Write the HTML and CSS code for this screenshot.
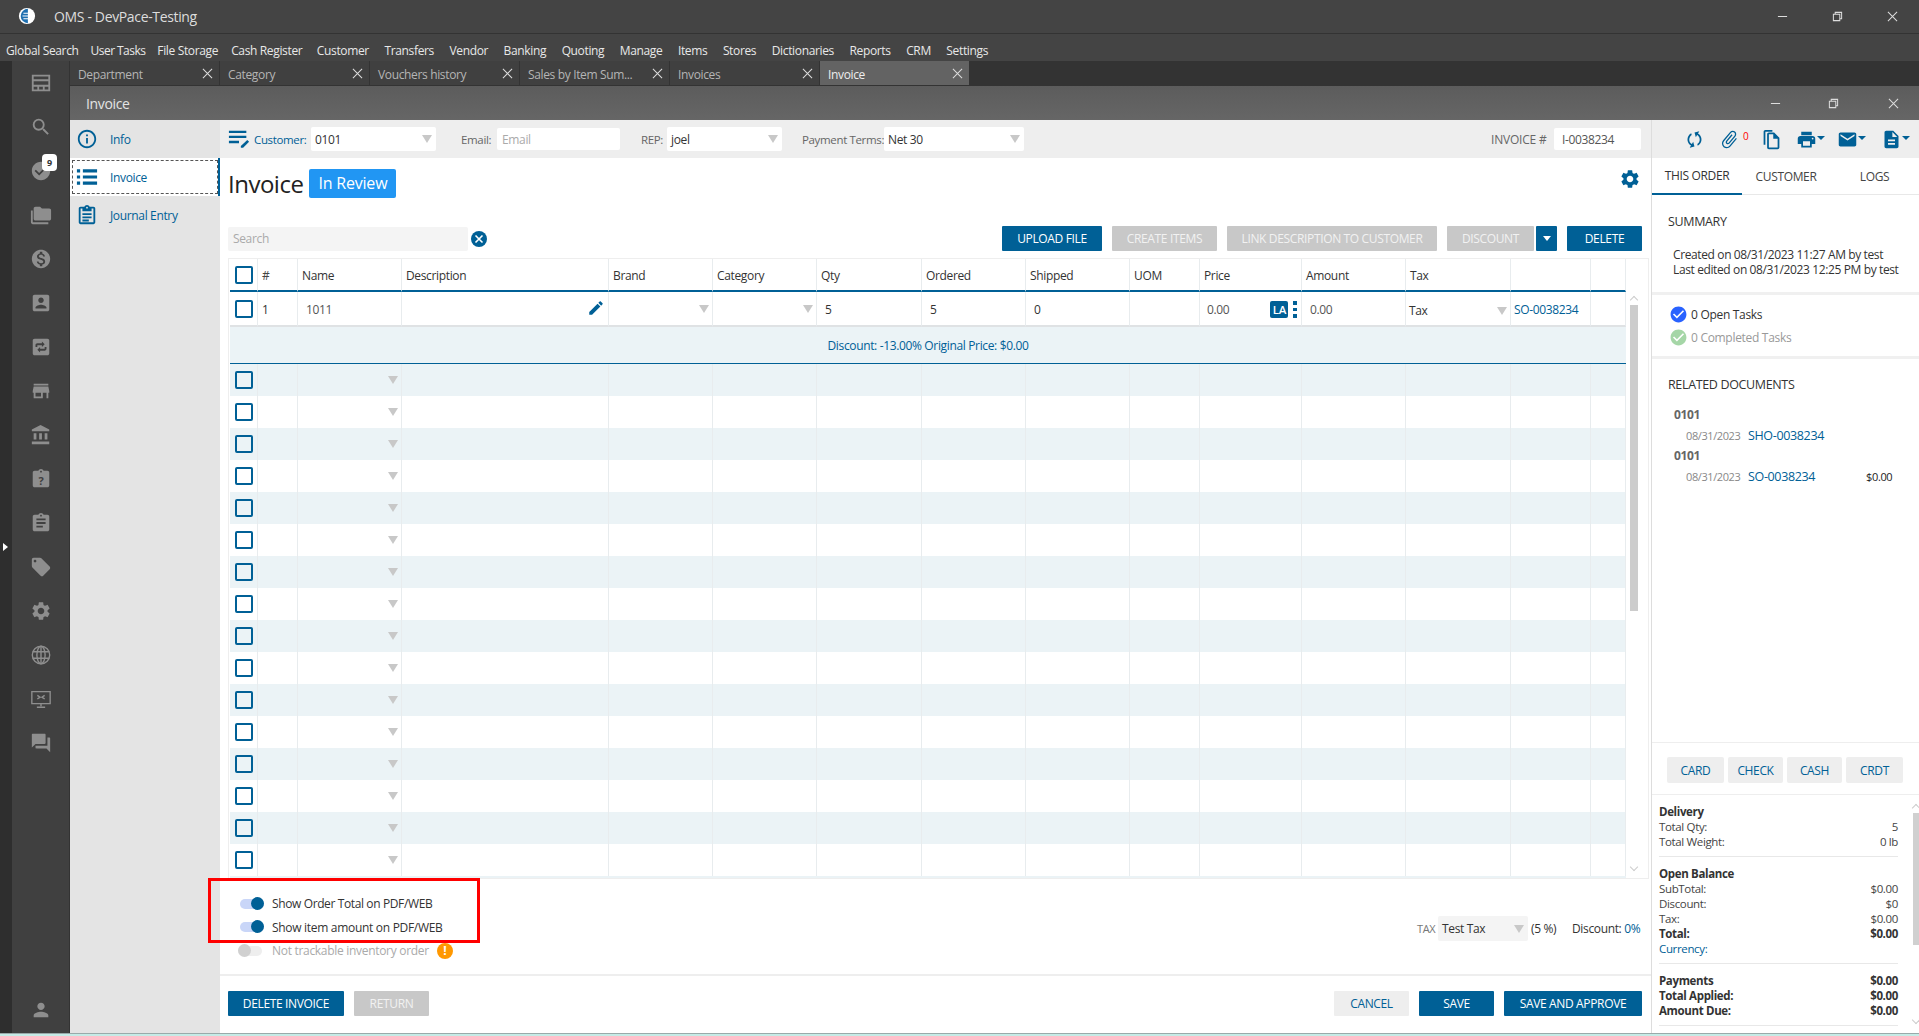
FILE: index.html
```html
<!DOCTYPE html>
<html lang="en">
<head>
<meta charset="utf-8">
<title>OMS - DevPace-Testing</title>
<link rel="stylesheet" href="styles.css">
</head>
<body>
<svg class="defs" width="0" height="0" aria-hidden="true">
  <symbol id="i-search" viewBox="0 0 24 24"><path d="M15.5 14h-.79l-.28-.27A6.471 6.471 0 0 0 16 9.5 6.5 6.5 0 1 0 9.5 16c1.61 0 3.09-.59 4.23-1.57l.27.28v.79l5 4.99L20.49 19l-4.99-5zm-6 0C7.01 14 5 11.99 5 9.5S7.01 5 9.5 5 14 7.01 14 9.5 11.99 14 9.5 14z"/></symbol>
  <symbol id="i-check" viewBox="0 0 24 24"><path d="M12 2C6.48 2 2 6.48 2 12s4.48 10 10 10 10-4.48 10-10S17.52 2 12 2zm-2 15l-5-5 1.41-1.41L10 14.17l7.59-7.59L19 8l-9 9z"/></symbol>
  <symbol id="i-folders" viewBox="0 0 24 24"><path d="M3 7H1v13c0 1.1.9 2 2 2h17v-2H3V7zm18-2h-8l-2-2H6c-1.1 0-2 .9-2 2v11c0 1.1.9 2 2 2h15c1.1 0 2-.9 2-2V7c0-1.1-.9-2-2-2z"/></symbol>
  <symbol id="i-dollar" viewBox="0 0 24 24"><path d="M12 2C6.48 2 2 6.48 2 12s4.48 10 10 10 10-4.48 10-10S17.52 2 12 2zm1.41 16.09V20h-2.67v-1.93c-1.71-.36-3.16-1.46-3.27-3.4h1.96c.1 1.05.82 1.87 2.65 1.87 1.96 0 2.4-.98 2.4-1.59 0-.83-.44-1.61-2.67-2.14-2.48-.6-4.18-1.62-4.18-3.67 0-1.72 1.39-2.84 3.11-3.21V4h2.67v1.95c1.86.45 2.79 1.86 2.87 3.39H14.3c-.05-1.11-.64-1.87-2.22-1.87-1.5 0-2.4.68-2.4 1.64 0 .84.65 1.39 2.67 1.91s4.18 1.39 4.18 3.91c-.01 1.83-1.38 2.83-3.12 3.16z"/></symbol>
  <symbol id="i-contact" viewBox="0 0 24 24"><path d="M3 5v14c0 1.1.89 2 2 2h14c1.1 0 2-.9 2-2V5c0-1.1-.9-2-2-2H5c-1.11 0-2 .9-2 2zm12 4c0 1.66-1.34 3-3 3s-3-1.34-3-3 1.34-3 3-3 3 1.34 3 3zm-9 8c0-2 4-3.1 6-3.1s6 1.1 6 3.1v1H6v-1z"/></symbol>
  <symbol id="i-swap" viewBox="0 0 24 24"><path fill-rule="evenodd" d="M5 3h14c1.1 0 2 .9 2 2v14c0 1.1-.9 2-2 2H5c-1.1 0-2-.9-2-2V5c0-1.1.9-2 2-2zm8 3v2H8c-1.1 0-2 .9-2 2v2h2v-2h5v2l3-3-3-3zm-2 12v-2h5c1.1 0 2-.9 2-2v-2h-2v2h-5v-2l-3 3 3 3z"/></symbol>
  <symbol id="i-store" viewBox="0 0 24 24"><path d="M20 4H4v2h16V4zm1 10v-2l-1-5H4l-1 5v2h1v6h10v-6h4v6h2v-6h1zm-9 4H6v-4h6v4z"/></symbol>
  <symbol id="i-bank" viewBox="0 0 24 24"><path d="M4 10v7h3v-7H4zm6 0v7h3v-7h-3zM2 22h19v-3H2v3zm14-12v7h3v-7h-3zm-4.5-9L2 6v2h19V6l-9.5-5z"/></symbol>
  <symbol id="i-clip" viewBox="0 0 24 24"><path d="M19 3h-4.18C14.4 1.84 13.3 1 12 1c-1.3 0-2.4.84-2.82 2H5c-1.1 0-2 .9-2 2v14c0 1.1.9 2 2 2h14c1.1 0 2-.9 2-2V5c0-1.1-.9-2-2-2zm-7 0c.55 0 1 .45 1 1s-.45 1-1 1-1-.45-1-1 .45-1 1-1z"/></symbol>
  <symbol id="i-assign" viewBox="0 0 24 24"><path d="M19 3h-4.18C14.4 1.84 13.3 1 12 1c-1.3 0-2.4.84-2.82 2H5c-1.1 0-2 .9-2 2v14c0 1.1.9 2 2 2h14c1.1 0 2-.9 2-2V5c0-1.1-.9-2-2-2zm-7 0c.55 0 1 .45 1 1s-.45 1-1 1-1-.45-1-1 .45-1 1-1zm2 14H7v-2h7v2zm3-4H7v-2h10v2zm0-4H7V7h10v2z"/></symbol>
  <symbol id="i-tag" viewBox="0 0 24 24"><path d="M21.41 11.58l-9-9C12.05 2.22 11.55 2 11 2H4c-1.1 0-2 .9-2 2v7c0 .55.22 1.05.59 1.42l9 9c.36.36.86.58 1.41.58.55 0 1.05-.22 1.41-.59l7-7c.37-.36.59-.86.59-1.41 0-.55-.23-1.06-.59-1.42zM5.5 7C4.67 7 4 6.33 4 5.5S4.67 4 5.5 4 7 4.67 7 5.5 6.33 7 5.5 7z"/></symbol>
  <symbol id="i-gear" viewBox="0 0 24 24"><path d="M19.14 12.94c.04-.3.06-.61.06-.94 0-.32-.02-.64-.07-.94l2.03-1.58c.18-.14.23-.41.12-.61l-1.92-3.32c-.12-.22-.37-.29-.59-.22l-2.39.96c-.5-.38-1.03-.7-1.62-.94l-.36-2.54c-.04-.24-.24-.41-.48-.41h-3.84c-.24 0-.43.17-.47.41l-.36 2.54c-.59.24-1.13.57-1.62.94l-2.39-.96c-.22-.08-.47 0-.59.22L2.74 8.87c-.12.21-.08.47.12.61l2.03 1.58c-.05.3-.09.63-.09.94s.02.64.07.94l-2.03 1.58c-.18.14-.23.41-.12.61l1.92 3.32c.12.22.37.29.59.22l2.39-.96c.5.38 1.03.7 1.62.94l.36 2.54c.05.24.24.41.48.41h3.84c.24 0 .44-.17.47-.41l.36-2.54c.59-.24 1.13-.56 1.62-.94l2.39.96c.22.08.47 0 .59-.22l1.92-3.32c.12-.22.07-.47-.12-.61l-2.01-1.58zM12 15.6c-1.98 0-3.6-1.62-3.6-3.6s1.62-3.6 3.6-3.6 3.6 1.62 3.6 3.6-1.62 3.6-3.6 3.6z"/></symbol>
  <symbol id="i-forum" viewBox="0 0 24 24"><path d="M21 6h-2v9H6v2c0 .55.45 1 1 1h11l4 4V7c0-.55-.45-1-1-1zm-4 6V3c0-.55-.45-1-1-1H3c-.55 0-1 .45-1 1v14l4-4h10c.55 0 1-.45 1-1z"/></symbol>
  <symbol id="i-person" viewBox="0 0 24 24"><path d="M12 12c2.21 0 4-1.79 4-4s-1.79-4-4-4-4 1.79-4 4 1.79 4 4 4zm0 2c-2.67 0-8 1.34-8 4v2h16v-2c0-2.66-5.33-4-8-4z"/></symbol>
  <symbol id="i-edit" viewBox="0 0 24 24"><path d="M3 17.25V21h3.75L17.81 9.94l-3.75-3.75L3 17.25zM20.71 7.04c.39-.39.39-1.02 0-1.41l-2.34-2.34c-.39-.39-1.02-.39-1.41 0l-1.83 1.83 3.75 3.75 1.83-1.83z"/></symbol>
  <symbol id="i-print" viewBox="0 0 24 24"><path d="M19 8H5c-1.66 0-3 1.34-3 3v6h4v4h12v-4h4v-6c0-1.66-1.34-3-3-3zm-3 11H8v-5h8v5zm3-7c-.55 0-1-.45-1-1s.45-1 1-1 1 .45 1 1-.45 1-1 1zm-1-9H6v4h12V3z"/></symbol>
  <symbol id="i-mail" viewBox="0 0 24 24"><path d="M20 4H4c-1.1 0-1.99.9-1.99 2L2 18c0 1.1.9 2 2 2h16c1.1 0 2-.9 2-2V6c0-1.1-.9-2-2-2zm0 4l-8 5-8-5V6l8 5 8-5v2z"/></symbol>
  <symbol id="i-doc" viewBox="0 0 24 24"><path d="M14 2H6c-1.1 0-1.99.9-1.99 2L4 20c0 1.1.89 2 1.99 2H18c1.1 0 2-.9 2-2V8l-6-6zm2 16H8v-2h8v2zm0-4H8v-2h8v2zm-3-5V3.5L18.5 9H13z"/></symbol>
  <symbol id="i-attach" viewBox="0 0 24 24"><path d="M16.5 6v11.5c0 2.21-1.79 4-4 4s-4-1.79-4-4V5c0-1.38 1.12-2.5 2.5-2.5s2.5 1.12 2.5 2.5v10.5c0 .55-.45 1-1 1s-1-.45-1-1V6H10v9.5c0 1.38 1.12 2.5 2.5 2.5s2.5-1.12 2.5-2.5V5c0-2.21-1.79-4-4-4S7 2.79 7 5v12.5c0 3.04 2.46 5.5 5.5 5.5s5.5-2.46 5.5-5.5V6h-1.5z" transform="rotate(40 12 12)"/></symbol>
  <symbol id="i-sync" viewBox="0 0 24 24"><path d="M12 4V1L8 5l4 4V6c3.31 0 6 2.69 6 6 0 1.01-.25 1.97-.7 2.8l1.46 1.46C19.54 15.03 20 13.57 20 12c0-4.42-3.58-8-8-8zm0 14c-3.31 0-6-2.69-6-6 0-1.01.25-1.97.7-2.8L5.24 7.74C4.46 8.97 4 10.43 4 12c0 4.42 3.58 8 8 8v3l4-4-4-4v3z" transform="rotate(30 12 12)"/></symbol>
  <symbol id="i-copy" viewBox="0 0 24 24"><path d="M13 1H5c-1.1 0-2 .9-2 2v15h2V3h8V1zm2 3H9c-1.1 0-2 .9-2 2v15c0 1.1.9 2 2 2h10c1.1 0 2-.9 2-2V10l-6-6zm4 17H9V6h5v5h5v10z"/></symbol>
  <symbol id="i-info" viewBox="0 0 24 24"><path d="M11 7h2v2h-2zm0 4h2v6h-2zm1-9C6.48 2 2 6.48 2 12s4.48 10 10 10 10-4.48 10-10S17.52 2 12 2zm0 18c-4.41 0-8-3.59-8-8s3.59-8 8-8 8 3.59 8 8-3.59 8-8 8z"/></symbol>
  <symbol id="i-journal" viewBox="0 0 24 24"><path d="M19 3h-4.2C14.4 1.8 13.3 1 12 1s-2.4.8-2.8 2H5c-1.1 0-2 .9-2 2v15c0 1.1.9 2 2 2h14c1.1 0 2-.9 2-2V5c0-1.1-.9-2-2-2zm-7 0c.6 0 1 .4 1 1s-.4 1-1 1-1-.4-1-1 .4-1 1-1zm7 17H5V5h2v3h10V5h2v15zM7 10h10v2H7zm0 3.500h10v2H7zM7 17h7v2H7z"/></symbol>
  <symbol id="i-list" viewBox="0 0 24 24"><path d="M1 3.500h3.500V7H1zm6.500 0H23V7H7.500zM1 10.250h3.500v3.500H1zm6.500 0H23v3.500H7.500zM1 17h3.500v3.500H1zm6.500 0H23v3.500H7.500z"/></symbol>
  <symbol id="i-lines" viewBox="0 0 24 24"><path d="M1 3h19v2.500H1zm0 5.500h19V11H1zM1 14h11v2.500H1zm13 5.500L21 13l2 2-6.500 6.500H14z"/></symbol>
</svg>

<div class="app">
  <header class="titlebar">
    <svg class="logo" viewBox="0 0 20 20"><circle cx="10" cy="10" r="9" fill="#fff"/><path d="M11 2a8 8 0 0 0 0 16z" fill="#1e6fb0"/><path d="M6 7h8M5 10h10M6 13h8" stroke="#fff" stroke-width="1.200"/></svg>
    <span class="apptitle">OMS - DevPace-Testing</span>
    <div class="winctl">
      <span class="win-btn"><svg viewBox="0 0 12 12"><path d="M1 6h10" /></svg></span>
      <span class="win-btn"><svg viewBox="0 0 12 12"><path d="M1.500 3.500h7v7h-7zM3.500 3.500v-2h7v7h-2"/></svg></span>
      <span class="win-btn"><svg viewBox="0 0 12 12"><path d="M1 1l10 10M11 1L1 11"/></svg></span>
    </div>
  </header>
  <nav class="menubar">
    <span>Global Search</span><span>User Tasks</span><span>File Storage</span><span>Cash Register</span><span>Customer</span><span>Transfers</span><span>Vendor</span><span>Banking</span><span>Quoting</span><span>Manage</span><span>Items</span><span>Stores</span><span>Dictionaries</span><span>Reports</span><span>CRM</span><span>Settings</span>
  </nav>
  <div class="body">
    <div class="edge"><span class="edge-arrow"></span></div>
    <aside class="rail">
      <span class="rail-i"><svg viewBox="0 0 24 24"><path fill-rule="evenodd" d="M2 3h20v18H2zm2 2v3h16V5zm0 5v4h16v-4zm0 6v3h4v-3zm6 0v3h4v-3zm6 0v3h4v-3z"/></svg></span>
      <span class="rail-i"><svg><use href="#i-search"/></svg></span>
      <span class="rail-i"><svg><use href="#i-check"/></svg><b class="count">9</b></span>
      <span class="rail-i"><svg><use href="#i-folders"/></svg></span>
      <span class="rail-i"><svg><use href="#i-dollar"/></svg></span>
      <span class="rail-i"><svg><use href="#i-contact"/></svg></span>
      <span class="rail-i"><svg><use href="#i-swap"/></svg></span>
      <span class="rail-i"><svg><use href="#i-store"/></svg></span>
      <span class="rail-i"><svg><use href="#i-bank"/></svg></span>
      <span class="rail-i"><svg viewBox="0 0 24 24"><use href="#i-clip"/><text x="12" y="18" text-anchor="middle" class="qmark">?</text></svg></span>
      <span class="rail-i"><svg><use href="#i-assign"/></svg></span>
      <span class="rail-i"><svg><use href="#i-tag"/></svg></span>
      <span class="rail-i"><svg><use href="#i-gear"/></svg></span>
      <span class="rail-i"><svg viewBox="0 0 24 24" class="stroked"><circle cx="12" cy="12" r="9.500"/><ellipse cx="12" cy="12" rx="4.500" ry="9.500"/><path d="M3 8.500h18M3 15.500h18M12 2.500v19"/></svg></span>
      <span class="rail-i"><svg viewBox="0 0 24 24" class="stroked"><path d="M2 4h20v13H2zM12 17v3M7.500 21h9M8 12l3-2-3-2M16 12l-3-2 3-2"/></svg></span>
      <span class="rail-i"><svg><use href="#i-forum"/></svg></span>
      <span class="rail-i rail-bottom"><svg><use href="#i-person"/></svg></span>
    </aside>
    <div class="work">
      <div class="tabs">
        <div class="tab"><span>Department</span><svg viewBox="0 0 12 12"><path d="M1 1l10 10M11 1L1 11"/></svg></div>
        <div class="tab"><span>Category</span><svg viewBox="0 0 12 12"><path d="M1 1l10 10M11 1L1 11"/></svg></div>
        <div class="tab"><span>Vouchers history</span><svg viewBox="0 0 12 12"><path d="M1 1l10 10M11 1L1 11"/></svg></div>
        <div class="tab"><span>Sales by Item Sum...</span><svg viewBox="0 0 12 12"><path d="M1 1l10 10M11 1L1 11"/></svg></div>
        <div class="tab"><span>Invoices</span><svg viewBox="0 0 12 12"><path d="M1 1l10 10M11 1L1 11"/></svg></div>
        <div class="tab tab-on"><span>Invoice</span><svg viewBox="0 0 12 12"><path d="M1 1l10 10M11 1L1 11"/></svg></div>
      </div>
      <div class="winhead">
        <span class="wintitle">Invoice</span>
        <div class="winctl winctl-in">
          <span class="win-btn"><svg viewBox="0 0 12 12"><path d="M1 6h10"/></svg></span>
          <span class="win-btn"><svg viewBox="0 0 12 12"><path d="M1.500 3.500h7v7h-7zM3.500 3.500v-2h7v7h-2"/></svg></span>
          <span class="win-btn"><svg viewBox="0 0 12 12"><path d="M1 1l10 10M11 1L1 11"/></svg></span>
        </div>
      </div>
      <div class="panes">
        <div class="sidenav">
          <div class="nav-row"><svg><use href="#i-info"/></svg><span>Info</span></div>
          <div class="nav-row nav-on"><svg><use href="#i-list"/></svg><span>Invoice</span></div>
          <div class="nav-row"><svg><use href="#i-journal"/></svg><span>Journal Entry</span></div>
        </div>
        <main class="main">
          <div class="formbar">
            <svg class="fb-icon"><use href="#i-lines"/></svg>
            <label class="lbl lbl-blue lbl-cust">Customer:</label>
            <div class="sel sel-cust"><span>0101</span><i class="arrow"></i></div>
            <label class="lbl lbl-email">Email:</label>
            <div class="inp inp-email">Email</div>
            <label class="lbl lbl-rep">REP:</label>
            <div class="sel sel-rep"><span>joel</span><i class="arrow"></i></div>
            <label class="lbl lbl-terms">Payment Terms:</label>
            <div class="sel sel-terms"><span>Net 30</span><i class="arrow"></i></div>
            <label class="lbl lbl-inv">INVOICE #</label>
            <div class="inp inp-inv">I-0038234</div>
          </div>
          <div class="titlerow">
            <h1>Invoice</h1>
            <span class="status">In Review</span>
            <svg class="cog"><use href="#i-gear"/></svg>
          </div>
          <div class="actions">
            <div class="search">Search</div>
            <span class="clear"><svg viewBox="0 0 12 12"><path d="M2.500 2.500l7 7M9.500 2.500l-7 7"/></svg></span>
            <div class="act-btns">
              <button class="btn btn-up">UPLOAD FILE</button>
              <button class="btn btn-off btn-ci">CREATE ITEMS</button>
              <button class="btn btn-off btn-link">LINK DESCRIPTION TO CUSTOMER</button>
              <div class="split"><button class="btn btn-off btn-disc">DISCOUNT</button><button class="btn btn-caret"><i></i></button></div>
              <button class="btn btn-del">DELETE</button>
            </div>
          </div>
          <div class="frame">
            <div class="gridwrap">
              <table class="grid">
                <colgroup><col class="c28"><col class="c40"><col class="c104"><col class="c207"><col class="c104"><col class="c104"><col class="c105"><col class="c104"><col class="c104"><col class="c70"><col class="c102"><col class="c104"><col class="c105"><col class="c80"><col class="c35"></colgroup>
                <thead>
                  <tr><th class="cb"><span class="check"></span></th><th class="hash">#</th><th>Name</th><th>Description</th><th>Brand</th><th>Category</th><th>Qty</th><th>Ordered</th><th>Shipped</th><th>UOM</th><th>Price</th><th>Amount</th><th>Tax</th><th></th><th></th></tr>
                </thead>
                <tbody>
                  <tr class="r-item"><td class="cb"><span class="check"></span></td><td class="num">1</td><td class="pad9 soft">1011</td><td class="endcell"><svg class="pencil"><use href="#i-edit"/></svg></td><td class="endcell"><i class="arrow"></i></td><td class="endcell"><i class="arrow"></i></td><td class="pad9">5</td><td class="pad9">5</td><td class="pad9">0</td><td></td><td class="pricecell"><div class="pricewrap"><span class="soft">0.00</span><b class="la">LA</b><span class="dots"></span></div></td><td class="pad9 soft">0.00</td><td class="taxcell"><div class="taxwrap"><span>Tax</span><i class="arrow"></i></div></td><td class="linkcell">SO-0038234</td><td></td></tr>
                  <tr class="r-band"><td colspan="15">Discount: -13.00% Original Price: $0.00</td></tr>
                  <tr class="tint"><td class="cb"><span class="check"></span></td><td></td><td class="endcell"><i class="arrow"></i></td><td></td><td></td><td></td><td></td><td></td><td></td><td></td><td></td><td></td><td></td><td></td><td></td></tr>
                  <tr><td class="cb"><span class="check"></span></td><td></td><td class="endcell"><i class="arrow"></i></td><td></td><td></td><td></td><td></td><td></td><td></td><td></td><td></td><td></td><td></td><td></td><td></td></tr>
                  <tr class="tint"><td class="cb"><span class="check"></span></td><td></td><td class="endcell"><i class="arrow"></i></td><td></td><td></td><td></td><td></td><td></td><td></td><td></td><td></td><td></td><td></td><td></td><td></td></tr>
                  <tr><td class="cb"><span class="check"></span></td><td></td><td class="endcell"><i class="arrow"></i></td><td></td><td></td><td></td><td></td><td></td><td></td><td></td><td></td><td></td><td></td><td></td><td></td></tr>
                  <tr class="tint"><td class="cb"><span class="check"></span></td><td></td><td class="endcell"><i class="arrow"></i></td><td></td><td></td><td></td><td></td><td></td><td></td><td></td><td></td><td></td><td></td><td></td><td></td></tr>
                  <tr><td class="cb"><span class="check"></span></td><td></td><td class="endcell"><i class="arrow"></i></td><td></td><td></td><td></td><td></td><td></td><td></td><td></td><td></td><td></td><td></td><td></td><td></td></tr>
                  <tr class="tint"><td class="cb"><span class="check"></span></td><td></td><td class="endcell"><i class="arrow"></i></td><td></td><td></td><td></td><td></td><td></td><td></td><td></td><td></td><td></td><td></td><td></td><td></td></tr>
                  <tr><td class="cb"><span class="check"></span></td><td></td><td class="endcell"><i class="arrow"></i></td><td></td><td></td><td></td><td></td><td></td><td></td><td></td><td></td><td></td><td></td><td></td><td></td></tr>
                  <tr class="tint"><td class="cb"><span class="check"></span></td><td></td><td class="endcell"><i class="arrow"></i></td><td></td><td></td><td></td><td></td><td></td><td></td><td></td><td></td><td></td><td></td><td></td><td></td></tr>
                  <tr><td class="cb"><span class="check"></span></td><td></td><td class="endcell"><i class="arrow"></i></td><td></td><td></td><td></td><td></td><td></td><td></td><td></td><td></td><td></td><td></td><td></td><td></td></tr>
                  <tr class="tint"><td class="cb"><span class="check"></span></td><td></td><td class="endcell"><i class="arrow"></i></td><td></td><td></td><td></td><td></td><td></td><td></td><td></td><td></td><td></td><td></td><td></td><td></td></tr>
                  <tr><td class="cb"><span class="check"></span></td><td></td><td class="endcell"><i class="arrow"></i></td><td></td><td></td><td></td><td></td><td></td><td></td><td></td><td></td><td></td><td></td><td></td><td></td></tr>
                  <tr class="tint"><td class="cb"><span class="check"></span></td><td></td><td class="endcell"><i class="arrow"></i></td><td></td><td></td><td></td><td></td><td></td><td></td><td></td><td></td><td></td><td></td><td></td><td></td></tr>
                  <tr><td class="cb"><span class="check"></span></td><td></td><td class="endcell"><i class="arrow"></i></td><td></td><td></td><td></td><td></td><td></td><td></td><td></td><td></td><td></td><td></td><td></td><td></td></tr>
                  <tr class="tint"><td class="cb"><span class="check"></span></td><td></td><td class="endcell"><i class="arrow"></i></td><td></td><td></td><td></td><td></td><td></td><td></td><td></td><td></td><td></td><td></td><td></td><td></td></tr>
                  <tr><td class="cb"><span class="check"></span></td><td></td><td class="endcell"><i class="arrow"></i></td><td></td><td></td><td></td><td></td><td></td><td></td><td></td><td></td><td></td><td></td><td></td><td></td></tr>
                </tbody>
              </table>
            </div>
            <div class="vscroll"><i class="chev chev-up"></i><span class="thumb"></span><i class="chev chev-down"></i></div>
          </div>
          <div class="options">
            <div class="toggles">
              <div class="tg"><span class="switch"></span><span class="tg-tight">Show Order Total on PDF/WEB</span></div>
              <div class="tg"><span class="switch"></span><span>Show item amount on PDF/WEB</span></div>
              <div class="tg tg-off"><span class="switch"></span><span>Not trackable inventory order</span><b class="warn">!</b></div>
            </div>
            <div class="taxbox">
              <span class="taxlbl">TAX</span>
              <div class="sel sel-tax"><span>Test Tax</span><i class="arrow"></i></div>
              <span class="pct">(5 %)</span>
              <span class="disc">Discount: <a>0%</a></span>
            </div>
            <div class="redbox"></div>
          </div>
          <div class="foot">
            <button class="btn btn-delinv">DELETE INVOICE</button>
            <button class="btn btn-off btn-ret">RETURN</button>
            <button class="btn btn-ghost">CANCEL</button>
            <button class="btn btn-save">SAVE</button>
            <button class="btn btn-sa">SAVE AND APPROVE</button>
          </div>
        </main>
        <aside class="side">
          <div class="sidetools">
            <svg class="t-sync"><use href="#i-sync"/></svg>
            <svg class="t-attach"><use href="#i-attach"/></svg><span class="zero">0</span>
            <svg class="t-copy"><use href="#i-copy"/></svg>
            <svg class="t-print"><use href="#i-print"/></svg><i class="caret"></i>
            <svg class="t-mail"><use href="#i-mail"/></svg><i class="caret"></i>
            <svg class="t-doc"><use href="#i-doc"/></svg><i class="caret"></i>
          </div>
          <div class="sidetabs">
            <span class="st st-on">THIS ORDER</span><span class="st st-mid">CUSTOMER</span><span class="st st-last">LOGS</span>
          </div>
          <section class="sec-sum">
            <h3>SUMMARY</h3>
            <p>Created on 08/31/2023 11:27 AM by test<br>Last edited on 08/31/2023 12:25 PM by test</p>
          </section>
          <section class="sec-tasks">
            <div class="task"><svg class="ck-blue"><use href="#i-check"/></svg><span>0 Open Tasks</span></div>
            <div class="task task-done"><svg class="ck-green"><use href="#i-check"/></svg><span>0 Completed Tasks</span></div>
          </section>
          <section class="sec-rel">
            <h3>RELATED DOCUMENTS</h3>
            <div class="rel-name">0101</div>
            <div class="rel-row"><span class="rel-date">08/31/2023</span><a class="rel-link">SHO-0038234</a></div>
            <div class="rel-name">0101</div>
            <div class="rel-row"><span class="rel-date">08/31/2023</span><a class="rel-link">SO-0038234</a><span class="rel-amt">$0.00</span></div>
          </section>
          <div class="paybtns">
            <button class="pay pay-w">CARD</button><button class="pay">CHECK</button><button class="pay">CASH</button><button class="pay pay-w">CRDT</button>
          </div>
          <div class="totals">
            <div class="tot-body">
              <div class="tot-group">
                <div class="tot-row bold"><span>Delivery</span></div>
                <div class="tot-row"><span>Total Qty:</span><span>5</span></div>
                <div class="tot-row"><span>Total Weight:</span><span>0 lb</span></div>
              </div>
              <div class="tot-group">
                <div class="tot-row bold"><span>Open Balance</span></div>
                <div class="tot-row"><span>SubTotal:</span><span>$0.00</span></div>
                <div class="tot-row"><span>Discount:</span><span>$0</span></div>
                <div class="tot-row"><span>Tax:</span><span>$0.00</span></div>
                <div class="tot-row bold"><span>Total:</span><span>$0.00</span></div>
                <div class="tot-row"><a>Currency:</a></div>
              </div>
              <div class="tot-group">
                <div class="tot-row bold"><span>Payments</span><span>$0.00</span></div>
                <div class="tot-row bold"><span>Total Applied:</span><span>$0.00</span></div>
                <div class="tot-row bold"><span>Amount Due:</span><span>$0.00</span></div>
              </div>
            </div>
            <div class="tot-scroll"><i class="chev chev-up"></i><span class="tot-thumb"></span><i class="chev chev-down"></i></div>
          </div>
        </aside>
      </div>
    </div>
  </div>
  <div class="strip"></div>
</div>
</body>
</html>
```
FILE: styles.css
```css
* { box-sizing: border-box; }
html, body { margin: 0; height: 100%; overflow: hidden; }
body { font-family: "Open Sans", "Noto Sans", sans-serif; font-size: 12px; letter-spacing: -0.35px; color: #333; background: #fff; }
.defs { position: absolute; }
a { color: #006096; }
button { font-family: inherit; letter-spacing: inherit; }

.app { display: flex; flex-direction: column; height: 1036px; width: 1919px; }

.titlebar { height: 34px; flex: none; background: #444; display: flex; align-items: center; padding-left: 18px; border-bottom: 1px solid #333; }
.logo { width: 18px; height: 18px; margin-top: -2px; }
.apptitle { margin-left: 18px; font-size: 14px; color: #ddd; }
.winctl { margin-left: auto; display: flex; }
.win-btn { width: 55px; height: 24px; display: flex; align-items: center; justify-content: center; }
.win-btn svg { width: 11px; height: 11px; fill: none; stroke: #ddd; stroke-width: 1.1; }
.titlebar .winctl { margin-right: -1px; margin-top: -1px; }

.menubar { height: 27px; flex: none; background: #444; display: flex; align-items: center; gap: 12px; padding-left: 6px; color: #e8e8e8; font-size: 12px; padding-top: 5px; }
.menubar span:nth-child(2) { letter-spacing: -0.55px; }
.menubar span:nth-child(4) { margin-left: 1px; }
.menubar span:nth-child(5) { margin-left: 2.500px; }
.menubar span:nth-child(n+6) { margin-left: 3.500px; }

.body { flex: 1; display: flex; min-height: 0; }
.edge { width: 12px; background: #2e2e2e; display: flex; align-items: center; flex: none; padding-top: 0; }
.edge-arrow { border-left: 5px solid #fff; border-top: 4px solid transparent; border-bottom: 4px solid transparent; margin-left: 3px; }
.rail { width: 58px; flex: none; background: #404040; display: flex; flex-direction: column; border-right: 1px solid #333; }
.rail-i { height: 44px; flex: none; display: flex; align-items: center; justify-content: center; position: relative; }
.rail-i svg { width: 22px; height: 22px; fill: #8e8e8e; }
.rail-i svg.stroked { fill: none; stroke: #8e8e8e; stroke-width: 1.5; }
.qmark { font-size: 12px; font-weight: 700; fill: #404040; stroke: none; font-family: "Open Sans", sans-serif; }
.rail-bottom { margin-top: auto; margin-bottom: 1px; }
.count { position: absolute; left: 30px; top: 5px; width: 15px; height: 17px; background: #fff; color: #333; border-radius: 4px; font-size: 9px; font-weight: 700; text-align: center; line-height: 17px; }

.work { flex: 1; min-width: 0; display: flex; flex-direction: column; }
.tabs { height: 25px; flex: none; background: #333; display: flex; }
.tab { width: 150px; background: #404040; border-right: 1px solid #333; border-bottom: 1px solid #333; display: flex; align-items: center; justify-content: space-between; padding: 2px 6px 0 8px; color: #b5b5b5; font-size: 12px; }
.tab svg { width: 11px; height: 11px; fill: none; stroke: #ddd; stroke-width: 1.1; margin-top: -2px; }
.tab-on { background: #636363; color: #eee; }

.winhead { height: 34px; flex: none; background: linear-gradient(#5c5c5c, #666); display: flex; align-items: center; padding-left: 16px; }
.wintitle { color: #e4e4e4; font-size: 14px; }
.winctl-in { margin-right: -2px; }
.winctl-in .win-btn:nth-child(2) { width: 58px; padding-left: 3px; }
.winctl-in .win-btn:nth-child(3) { width: 60px; padding-left: 4px; }

.panes { flex: 1; display: flex; min-height: 0; }
.sidenav { width: 150px; flex: none; background: #e4e4e4; }
.nav-row { height: 38px; display: flex; align-items: center; padding-left: 6px; color: #006096; font-size: 12px; }
.nav-row svg { width: 22px; height: 22px; fill: #006096; margin-right: 12px; flex: none; }
.nav-on { background: #fff; border-right: 2px solid #006096; outline: 1px dashed #555; outline-offset: -3px; }

.main { width: 1431px; flex: none; display: flex; flex-direction: column; background: #fff; }
.formbar { height: 38px; flex: none; background: #eee; display: flex; align-items: center; padding-left: 8px; }
.fb-icon { width: 22px; height: 22px; fill: #006096; flex: none; }
.lbl { color: #666; font-size: 11.500px; flex: none; white-space: nowrap; }
.lbl-blue { color: #006096; }
.lbl-cust { margin-left: 4px; width: 57px; }
.lbl-email { margin-left: 25px; width: 36px; }
.lbl-rep { margin-left: 21px; width: 26px; }
.lbl-terms { margin-left: 20px; width: 82px; }
.lbl-inv { margin-left: auto; width: 63px; font-size: 12px; letter-spacing: -0.2px; }
.sel { height: 24px; background: #fff; border-radius: 2px; display: flex; align-items: center; justify-content: space-between; padding: 0 4px; color: #333; flex: none; }
.arrow { display: inline-block; border-top: 8px solid #c8c8c8; border-left: 5px solid transparent; border-right: 5px solid transparent; flex: none; }
.sel-cust { width: 125px; }
.sel-rep { width: 115px; }
.sel-terms { width: 140px; }
.inp { height: 22px; background: #fff; border-radius: 2px; display: flex; align-items: center; padding: 0 5px; flex: none; }
.inp-email { width: 123px; color: #aaa; }
.inp-inv { width: 87px; margin-right: 10px; padding: 0 8px; color: #555; }

.titlerow { height: 52px; flex: none; display: flex; align-items: center; padding: 0 10px 2px 8px; }
h1 { font-size: 24px; font-weight: 400; color: #222; margin: 0; letter-spacing: -0.5px; }
.status { margin-left: 6px; width: 87px; height: 29px; background: #2196f3; border-radius: 2px; color: #fff; font-size: 16px; letter-spacing: -0.2px; display: flex; align-items: center; justify-content: center; }
.cog { width: 22px; height: 22px; fill: #006096; margin-left: auto; margin-top: -8px; }

.actions { height: 25px; margin-top: 16px; flex: none; display: flex; align-items: center; padding: 0 9px 0 8px; }
.search { width: 240px; height: 24px; background: #f4f4f4; border-radius: 2px; color: #aaa; display: flex; align-items: center; padding-left: 5px; }
.clear { width: 16px; height: 16px; border-radius: 50%; background: #006096; margin-left: 3px; display: flex; align-items: center; justify-content: center; }
.clear svg { width: 12px; height: 12px; fill: none; stroke: #fff; stroke-width: 1.600; }
.act-btns { margin-left: auto; display: flex; gap: 10px; }
.btn { height: 25px; border: 0; border-radius: 1px; background: #006096; color: #fff; font-size: 12px; padding: 0 14px; white-space: nowrap; display: flex; align-items: center; justify-content: center; }
.btn-off { background: #c8c8c8; color: #f2f2f2; }
.split { display: flex; gap: 2px; }
.btn-disc { width: 87px; padding: 0; }
.btn-caret { width: 21px; padding: 0; }
.btn-caret i { border-top: 5px solid #fff; border-left: 4px solid transparent; border-right: 4px solid transparent; }
.btn-del { width: 75px; padding: 0; }
.btn-up { width: 100px; padding: 0; }
.btn-ci { width: 105px; padding: 0; }
.btn-link { width: 210px; padding: 0; }

.frame { margin: 7px 2px 0 8px; height: 621px; flex: none; border: 1px solid #eee; display: flex; padding-left: 1px; }
.gridwrap { width: 1396px; height: 619px; overflow: hidden; flex: none; background: #ebf3f6; }
.grid { width: 1396px; table-layout: fixed; border-collapse: separate; border-spacing: 0; background: #fff; }
.c28 { width: 28px; } .c40 { width: 40px; } .c104 { width: 104px; } .c207 { width: 207px; } .c105 { width: 105px; } .c70 { width: 70px; } .c102 { width: 102px; } .c80 { width: 80px; } .c35 { width: 35px; }
.grid th, .grid td { padding: 0; border-right: 1px solid #e8ecee; }
.grid th { height: 33px; border-bottom: 2px solid #006096; font-weight: 400; text-align: left; padding: 1px 4px 0; color: #333; }
.grid th.cb, .grid td.cb { padding: 0 0 0 5px; }
.grid th.hash { color: #444; }
.grid tbody td { height: 32px; }
.check { display: block; width: 18px; height: 18px; border: 2px solid #006096; border-radius: 2px; background: #fff; }
.tint td { background: #ebf3f6; }
.tint .check { background: transparent; }
.grid .r-item td { height: 35px; border-bottom: 2px solid #dfe2e4; padding-top: 1px; }
.grid .r-item td.cb { padding-top: 1px; }
.num { padding-left: 4px !important; }
.pad9 { padding-left: 8px !important; }
.soft { color: #555; }
.endcell { text-align: right; padding-right: 3px !important; line-height: 0; }
.pencil { width: 18px; height: 18px; fill: #006096; vertical-align: middle; margin-right: 0; margin-top: -3px; }
.pricewrap { display: flex; align-items: center; padding-left: 7px; }
.la { margin-left: 41px; width: 18px; height: 17px; background: #006096; color: #fff; font-size: 11.500px; border-radius: 2px; display: flex; align-items: center; justify-content: center; font-weight: 600; }
.dots { width: 4px; height: 17px; margin-left: 5px; background: repeating-linear-gradient(#006096 0 4px, transparent 4px 6.500px); }
.taxwrap { display: flex; align-items: center; justify-content: space-between; padding: 3px 3px 0 3px; }
.linkcell { color: #006096; padding-left: 3px !important; }
.grid .r-band td { height: 37px; background: #ebf3f6; border-bottom: 1px solid #006096; border-right: 0; text-align: center; color: #006096; padding-top: 1px; }

.vscroll { width: 15px; flex: none; border-left: 0; display: flex; flex-direction: column; align-items: center; position: relative; padding-top: 38px; }
.chev { display: block; width: 6px; height: 6px; border-top: 1px solid #ccc; border-left: 1px solid #ccc; }
.chev-up { transform: rotate(45deg); margin-bottom: 2px; }
.chev-down { transform: rotate(225deg); }
.vscroll .thumb { width: 8px; height: 306px; background: #ccc; margin-bottom: 253px; }

.options { height: 95px; flex: none; position: relative; display: flex; justify-content: space-between; padding: 13px 9px 0 20px; }
.tg { height: 23.500px; display: flex; align-items: center; gap: 8px; font-size: 12px; letter-spacing: -0.3px; color: #333; }
.tg-tight { letter-spacing: -0.38px; }
.switch { width: 24px; height: 10px; border-radius: 5px; background: #c9d6f8; position: relative; flex: none; }
.switch::after { content: ""; position: absolute; right: 0; top: -2px; width: 13px; height: 13px; border-radius: 50%; background: #006096; }
.tg-off { color: #aaa; }
.tg-off .switch { background: #eee; margin-left: -2px; margin-right: 2px; }
.tg-off .switch::after { right: auto; left: 0; background: #d0d0d0; }
.warn { width: 16px; height: 16px; border-radius: 50%; background: #ff9800; color: #fff; font-size: 12px; display: flex; align-items: center; justify-content: center; margin-left: 0; }
.taxbox { display: flex; align-items: center; height: 25px; margin-top: 24px; color: #333; }
.taxlbl { color: #777; font-size: 11px; width: 21px; }
.sel-tax { width: 90px; height: 25px; background: #f4f4f4; }
.pct { margin-left: 3px; width: 41px; }
.disc a { color: #006096; }
.disc { width: 70px; white-space: nowrap; }
.redbox { position: absolute; left: -12px; top: -1px; width: 272px; height: 65px; border: 3px solid #f00; }

.foot { flex: 1; border-top: 2px solid #eee; padding: 15px 9px 0 8px; display: flex; gap: 10px; align-items: flex-start; }
.btn-delinv { width: 116px; padding: 0; }
.btn-ret { width: 75px; padding: 0; }
.btn-ghost { width: 75px; padding: 0; background: #eee; color: #006096; margin-left: auto; }
.btn-save { width: 75px; padding: 0; }
.btn-sa { width: 138px; padding: 0; }

.side { flex: 1; min-width: 0; border-left: 1px solid #ddd; display: flex; flex-direction: column; background: #fff; }
.sidetools { height: 38px; flex: none; background: #eee; position: relative; display: flex; align-items: center; }
.sidetools svg { width: 21px; height: 21px; fill: #006096; flex: none; }
.t-sync { margin-left: 32px; }
.t-attach { margin-left: 14px; }
.zero { color: #f00; font-size: 10px; margin-left: 3px; width: 9px; margin-top: -7px; }
.t-copy { margin-left: 9px; }
.t-print { margin-left: 14px; }
.t-mail { margin-left: 12px; }
.t-doc { margin-left: 15px; }
.caret { border-top: 4px solid #006096; border-left: 4px solid transparent; border-right: 4px solid transparent; margin-top: -3px; flex: none; }
.sidetabs { height: 37px; flex: none; display: flex; border-bottom: 1px solid #e8e8e8; font-size: 12px; color: #444; }
.st { display: flex; align-items: center; justify-content: center; }
.st-on { width: 90px; border-bottom: 2px solid #006096; height: 37px; color: #333; }
.st-mid { width: 88px; }
.st-last { width: 89px; }
.sec-sum { height: 100px; flex: none; border-bottom: 3px solid #f0f0f0; padding: 19px 0 0 16px; }
h3 { font-size: 12.500px; font-weight: 500; color: #333; margin: 0; line-height: 15px; }
.sec-sum p { margin: 18px 0 0 5px; line-height: 15px; font-size: 12px; letter-spacing: -0.38px; color: #333; }
.sec-tasks { height: 64px; flex: none; border-bottom: 3px solid #f0f0f0; padding: 8px 0 0 17px; }
.task { height: 23px; display: flex; align-items: center; gap: 3px; font-size: 12px; letter-spacing: -0.3px; }
.task svg { width: 19px; height: 19px; flex: none; }
.ck-blue { fill: #2962ff; }
.ck-green { fill: #a5d6a7; }
.task-done { color: #999; }
.sec-rel { height: 383px; flex: none; padding: 18px 0 0 16px; }
.rel-name { font-weight: 700; color: #666; margin: 8px 0 0 6px; line-height: 16px; }
.sec-rel h3 + .rel-name { margin-top: 15px; }
.rel-name + .rel-row + .rel-name { margin-top: 3px; }
.rel-row { display: flex; align-items: center; height: 20px; padding-left: 18px; margin-top: 2px; }
.rel-date { font-size: 11px; color: #888; width: 62px; letter-spacing: -0.4px; }
.rel-link { font-size: 12.500px; color: #006096; width: 118px; }
.rel-amt { font-size: 11px; color: #222; }
.paybtns { height: 53px; flex: none; display: flex; gap: 4px; padding: 14px 0 0 15px; border-top: 1px solid #eee; border-bottom: 1px solid #eee; }
.pay { width: 55px; height: 26px; border: 0; background: #eee; border-radius: 2px; color: #006096; font-size: 12px; padding: 0; }
.pay-w { width: 57px; }
.totals { flex: 1; min-height: 0; display: flex; }
.tot-body { width: 246px; padding: 9px 0 0 7px; flex: none; }
.tot-group { border-bottom: 1px solid #e8e8e8; padding-bottom: 7px; margin-bottom: 9px; }
.tot-row { display: flex; justify-content: space-between; height: 15px; line-height: 15px; font-size: 11.500px; color: #444; }
.tot-row a { color: #006096; }
.bold { font-weight: 700; color: #333; }
.tot-scroll { flex: 1; display: flex; flex-direction: column; align-items: center; padding: 10px 0 0 14px; overflow: hidden; }
.tot-thumb { width: 6px; height: 132px; background: #d0d0d0; margin-bottom: 72px; }

.strip { height: 3px; flex: none; background: #c5ebe6; border-top: 1px solid #9aa; }
```
